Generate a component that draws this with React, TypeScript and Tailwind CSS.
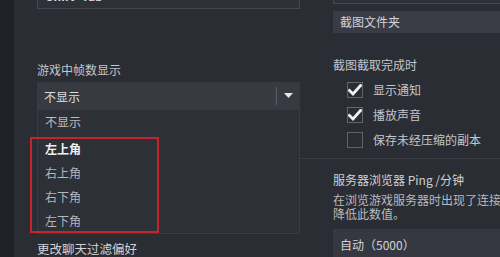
import React from 'react';

const font = { fontFamily: '"Noto Sans CJK SC", "Noto Sans", sans-serif' };

const listItems = [
  { label: '左上角', active: true },
  { label: '右上角', active: false },
  { label: '右下角', active: false },
  { label: '左下角', active: false },
];

function Checkbox({ checked, label }: { checked: boolean; label: string }) {
  return (
    <div className="flex h-[25px] items-center pl-[14px]">
      <div className="flex h-[16px] w-[16px] items-center justify-center border border-[#62656c] bg-[#2a2d33]">
        {checked && (
          <svg width="14" height="12" viewBox="0 0 14 12">
            <path d="M1.5 6.5 L5 10 L12.5 1.5" fill="none" stroke="#f2f2f2" strokeWidth="2.8" strokeLinecap="square" />
          </svg>
        )}
      </div>
      <span className="ml-[10px] text-[12px] leading-[16px] text-[#c3c6cb]">{label}</span>
    </div>
  );
}

export default function App() {
  return (
    <div className="flex h-[257px] w-[500px] overflow-hidden bg-[#2a2d33]" style={font}>
      {/* dark strip at the left edge */}
      <div className="w-[14px] shrink-0 bg-[#1f2227]" />

      <div className="relative flex flex-1">
        {/* left column */}
        <div className="ml-[23px] flex w-[263px] shrink-0 flex-col">
          <div className="mt-[-17px] flex h-[26px] items-center border border-[#44474e] bg-[#2e3137] px-[8px]">
            <span className="text-[12px] font-bold text-[#d8dadd]">Shift+Tab</span>
          </div>

          <div className="mt-[53px] text-[12px] leading-[16px] text-[#c3c6cb]">游戏中帧数显示</div>

          <div className="mt-[4px] flex h-[28px] items-center bg-[#373a41]">
            <span className="ml-[7px] flex-1 pt-[3px] text-[12px] text-[#dcdee1]">不显示</span>
            <div className="h-[18px] w-px bg-[#5d6068]" />
            <svg className="ml-[7px] mr-[7px]" width="9" height="5" viewBox="0 0 9 5">
              <path d="M0 0 L9 0 L4.5 5 Z" fill="#e4e6e8" />
            </svg>
          </div>

          <div className="flex h-[125px] flex-col border-x border-b border-[#393c43] bg-[#2d3037]">
            <div className="flex h-[27px] items-center pb-[3px] pl-[7px] text-[12px] text-[#b9bcc1]">不显示</div>
            {listItems.map((item) => (
              <div
                key={item.label}
                className={`flex h-[24px] items-center pl-[7px] text-[12px] ${
                  item.active ? 'font-bold text-[#f0f1f2]' : 'text-[#b3b6bb]'
                }`}
              >
                {item.label}
              </div>
            ))}
          </div>

          <div className="mt-[7px] text-[12.5px] leading-[16px] text-[#d0d2d5]">更改聊天过滤偏好</div>
        </div>

        {/* right column */}
        <div className="ml-[33px] flex min-w-0 flex-1 flex-col">
          <div className="mt-[-20px] flex h-[26px] items-center border border-[#44474e] bg-[#2e3137] px-[8px]">
            <span className="text-[12px] text-[#d8dadd]">F12</span>
          </div>

          <div className="mt-[7px] flex h-[25px] items-center bg-[#393c44] pl-[7px]">
            <span className="text-[12px] text-[#d2d4d7]">截图文件夹</span>
          </div>

          <div className="mt-[24px] text-[12px] leading-[16px] text-[#c3c6cb]">截图截取完成时</div>

          <div className="mt-[4px] flex flex-col">
            <Checkbox checked label="显示通知" />
            <Checkbox checked label="播放声音" />
            <Checkbox checked={false} label="保存未经压缩的副本" />
          </div>

          <div className="ml-[-33px] mt-[6px] h-px bg-[#3a3d44]" />

          <div className="mt-[13px] whitespace-nowrap text-[12px] leading-[16px] text-[#d0d2d5]">
            服务器浏览器 Ping /分钟
          </div>

          <div className="mt-[5px] whitespace-nowrap text-[12px] leading-[14px] text-[#b7bac0]">
            <div>在浏览游戏服务器时出现了连接问题，</div>
            <div>降低此数值。</div>
          </div>

          <div className="mt-[8px] flex h-[30px] items-start bg-[#353840] pl-[7px] pt-[8px]">
            <span className="whitespace-nowrap text-[12px] leading-[16px] text-[#d2d4d7]">自动（5000）</span>
          </div>
        </div>

        {/* red annotation frame */}
        <div className="pointer-events-none absolute left-[16px] top-[137px] h-[96px] w-[129px] border-2 border-[#c8222b]" />
      </div>
    </div>
  );
}
